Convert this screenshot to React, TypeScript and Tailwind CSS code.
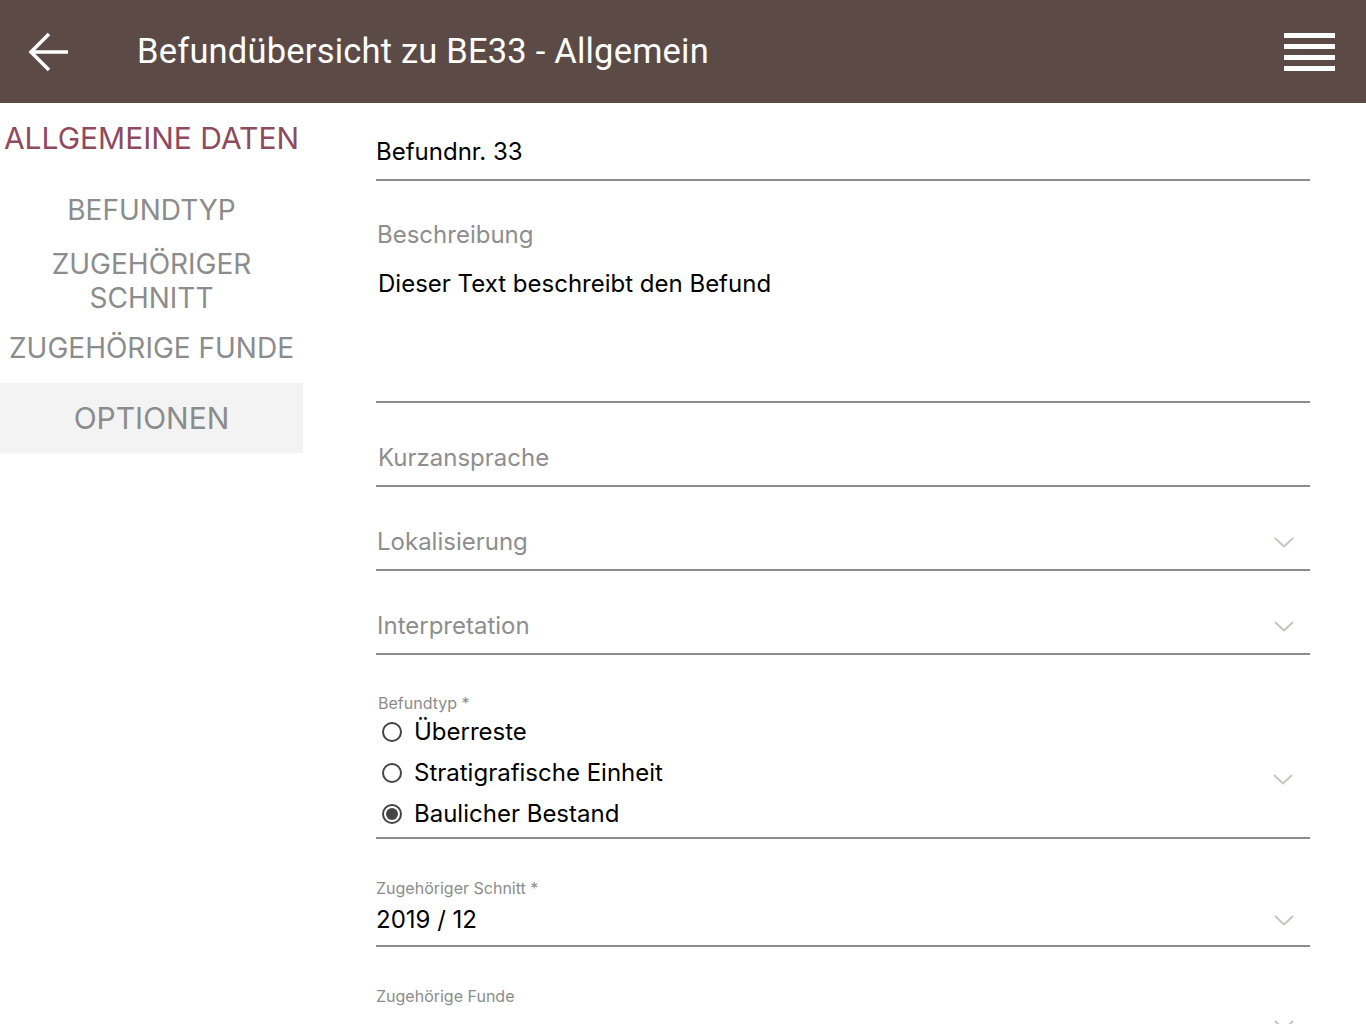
const navItems = [
  { label: 'ALLGEMEINE DATEN', active: true, cls: 'mt-[18px] text-[30px]' },
  { label: 'BEFUNDTYP', cls: 'mt-[38px]' },
  { label: 'ZUGEHÖRIGER SCHNITT', cls: 'mt-[20px] px-10' },
  { label: 'ZUGEHÖRIGE FUNDE', cls: 'mt-[16px]' },
]

const radios = [
  { label: 'Überreste', checked: false },
  { label: 'Stratigrafische Einheit', checked: false },
  { label: 'Baulicher Bestand', checked: true },
]

function Chevron({ className = '' }: { className?: string }) {
  return (
    <svg viewBox="0 0 20 11" className={`h-[11px] w-[20px] ${className}`} fill="none" aria-hidden>
      <path d="M1.5 1.5l8.5 8 8.5-8" stroke="#c9c5bd" strokeWidth="2" strokeLinecap="round" strokeLinejoin="round" />
    </svg>
  )
}

function Header() {
  return (
    <header className="flex h-[103px] items-center bg-[#5c4a47] text-white">
      <button type="button" aria-label="Zurück" className="ml-[28px] grid h-[42px] w-[42px] place-items-center">
        <svg viewBox="0 0 42 42" className="h-[42px] w-[42px]" fill="none" aria-hidden>
          <path d="M40 21H4M21 3L3 21l18 18" stroke="currentColor" strokeWidth="3.5" strokeLinejoin="miter" />
        </svg>
      </button>
      <h1 className="ml-[67px] font-['Roboto',sans-serif] text-[34.5px] leading-none tracking-[0.2px]">
        Befundübersicht zu BE33 - Allgemein
      </h1>
      <button type="button" aria-label="Menü" className="ml-auto mr-[31px] flex flex-col gap-[6px]">
        <span className="h-[5px] w-[51px] bg-white" />
        <span className="h-[5px] w-[51px] bg-white" />
        <span className="h-[5px] w-[51px] bg-white" />
        <span className="h-[5px] w-[51px] bg-white" />
      </button>
    </header>
  )
}

function Sidebar() {
  return (
    <aside className="flex w-[303px] shrink-0 flex-col font-['Inter',sans-serif] text-[28px] leading-[34px]">
      {navItems.map((n) => (
        <a
          key={n.label}
          href="#"
          className={`block text-center ${n.cls} ${n.active ? 'text-[#8e4a5e]' : 'text-[#8c8c8c]'}`}
        >
          {n.label}
        </a>
      ))}
      <a href="#" className="mt-[18px] flex h-[70px] items-center justify-center bg-[#f3f3f3] text-[30px] text-[#8c8c8c]">
        OPTIONEN
      </a>
    </aside>
  )
}

function Form() {
  return (
    <main className="flex-1 pl-[73px] pr-[56px] font-['Inter',sans-serif] text-[24px] leading-[32px] text-black">
      <div className="border-b-2 border-[#8c8c8c] pb-[11px] pt-[33px]">Befundnr. 33</div>

      <div className="border-b-2 border-[#8c8c8c] pl-[1px] pt-[38px]">
        <div className="text-[#8e8e8e]">Beschreibung</div>
        <div className="mt-[17px] min-h-[133px] pl-[1px]">Dieser Text beschreibt den Befund</div>
      </div>

      <div className="border-b-2 border-[#8c8c8c] pb-[11px] pl-[2px] pt-[39px] text-[#8e8e8e]">Kurzansprache</div>

      <div className="flex items-center justify-between border-b-2 border-[#8c8c8c] pb-[11px] pl-[1px] pr-[16px] pt-[39px] text-[#8e8e8e]">
        <span>Lokalisierung</span>
        <Chevron />
      </div>

      <div className="flex items-center justify-between border-b-2 border-[#8c8c8c] pb-[11px] pl-[1px] pr-[16px] pt-[39px] text-[#8e8e8e]">
        <span>Interpretation</span>
        <Chevron />
      </div>

      <div className="border-b-2 border-[#8c8c8c] pb-[3px] pl-[2px] pt-[40px]">
        <div className="text-[16px] leading-[16px] text-[#8c8c8c]">Befundtyp *</div>
        <div className="flex items-center justify-between pr-[17px]">
          <div className="flex flex-col">
            {radios.map((r) => (
              <label key={r.label} className="flex h-[41px] items-center gap-[12px]">
                <span className="ml-[4px] grid h-[20px] w-[20px] place-items-center rounded-full border-2 border-[#444]">
                  {r.checked ? <span className="h-[12px] w-[12px] rounded-full bg-[#444]" /> : null}
                </span>
                <span>{r.label}</span>
              </label>
            ))}
          </div>
          <Chevron className="mt-[14px]" />
        </div>
      </div>

      <div className="border-b-2 border-[#8c8c8c] pb-[9px] pt-[40px]">
        <div className="text-[16px] leading-[18px] text-[#8c8c8c]">Zugehöriger Schnitt *</div>
        <div className="mt-[7px] flex items-center justify-between pr-[16px]">
          <span>2019 / 12</span>
          <Chevron />
        </div>
      </div>

      <div className="pt-[40px]">
        <div className="text-[16px] leading-[18px] text-[#8c8c8c]">Zugehörige Funde</div>
        <div className="mt-[15px] flex justify-end pr-[16px]">
          <Chevron />
        </div>
      </div>
    </main>
  )
}

export default function App() {
  return (
    <div className="h-screen overflow-hidden bg-white">
      <Header />
      <div className="flex">
        <Sidebar />
        <Form />
      </div>
    </div>
  )
}
